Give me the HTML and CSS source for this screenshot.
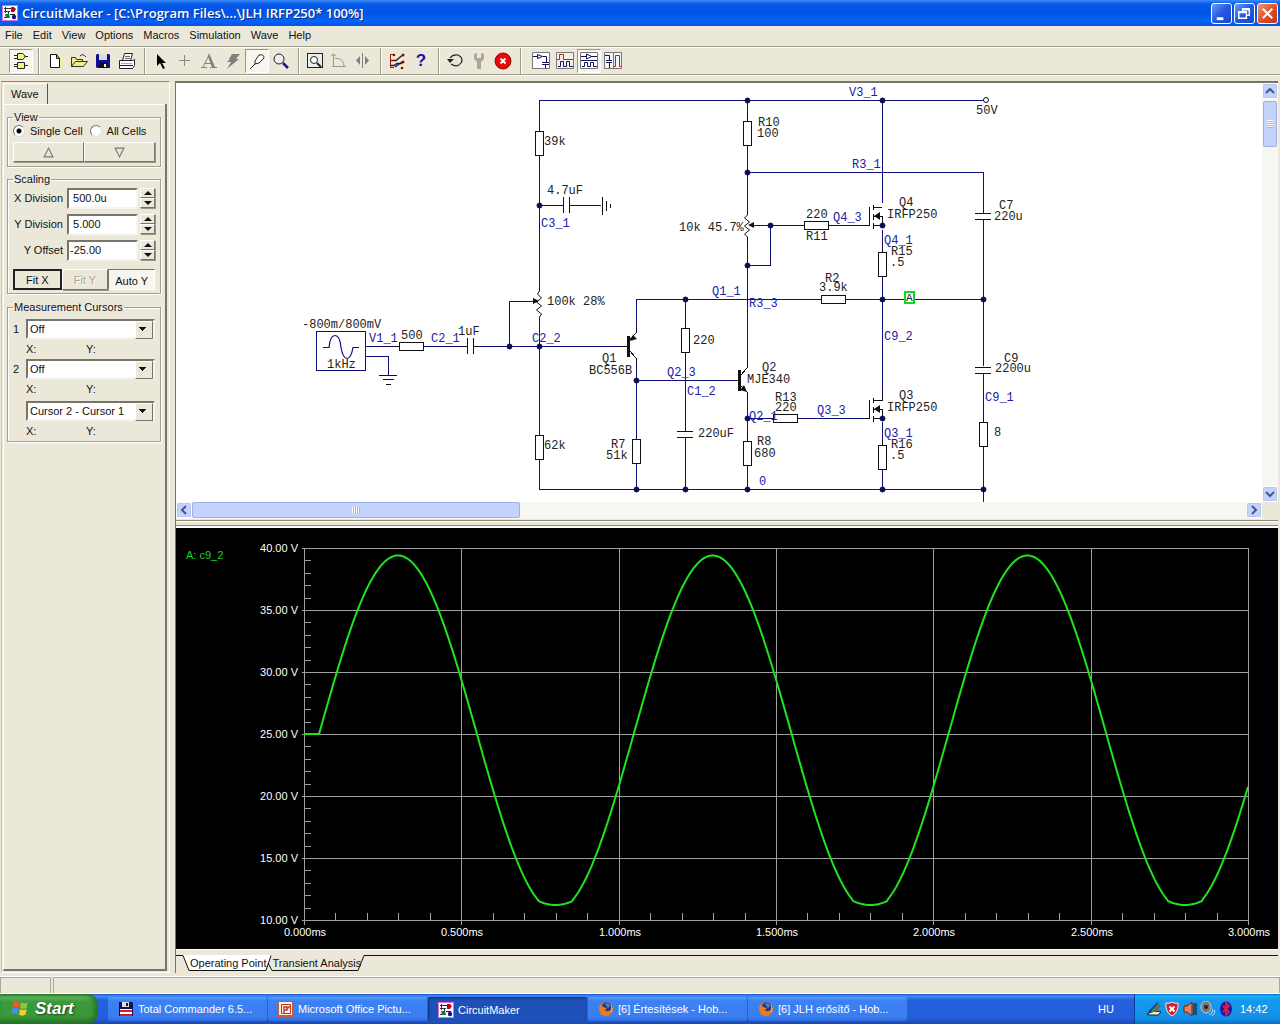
FILE: index.html
```html
<!DOCTYPE html>
<html lang="en">
<head>
<meta charset="utf-8">
<title>CircuitMaker</title>
<link rel="stylesheet" href="styles.css">
</head>
<body>
<svg class="defs" aria-hidden="true">
  <defs>
    <symbol id="app" viewBox="0 0 16 16">
      <rect width="16" height="16" fill="#fff"/><rect x="0.500" y="0.500" width="15" height="15" fill="none" stroke="#e070d8"/>
      <path d="M2 3.500h7M2 6.500h6M3.500 2v6M6.500 6v7M2 12.500h3" stroke="#333" fill="none"/>
      <path d="M9 2h3l2 2-2 3H9z" fill="#c00020"/><path d="M3 9h4l1 4H4z" fill="#0a7a30"/><circle cx="12" cy="12" r="2.200" fill="#101090"/><path d="M8 9.500h5" stroke="#222"/>
    </symbol>
    <symbol id="fox" viewBox="0 0 16 16">
      <circle cx="8" cy="8" r="7" fill="#e8641b"/><circle cx="8.500" cy="6.500" r="5" fill="#173f8f"/><path d="M7 3q4-2 5 2l-2 2z" fill="#3b8fd8"/>
      <path d="M1 6l2-3 2 3 4 1-2 2q2 3 7-1 0 6-6 7Q1 15 1 6z" fill="#ef7a1a"/><path d="M13 3q3 5 0 9 1-5 0-9z" fill="#ffc83a"/>
    </symbol>
  </defs>
</svg>

<header class="title-bar">
  <svg class="icon16"><use href="#app"/></svg>
  <h1>CircuitMaker - [C:\Program Files\...\JLH IRFP250* 100%]</h1>
  <div class="window-buttons">
    <button type="button" aria-label="Minimize"><svg viewBox="0 0 20 20"><path d="M5 14h7v3H5z" fill="#fff"/></svg></button>
    <button type="button" aria-label="Restore"><svg viewBox="0 0 20 20"><path d="M8 8V5h7v7h-3M8 6h7M4 8h8v7H4zM4 9h8" stroke="#fff" stroke-width="1.500" fill="none"/></svg></button>
    <button type="button" class="close" aria-label="Close"><svg viewBox="0 0 20 20"><path d="M5 5l10 10M15 5L5 15" stroke="#fff" stroke-width="2.200"/></svg></button>
  </div>
</header>

<nav class="menu-bar">
  <a href="#">File</a><a href="#">Edit</a><a href="#">View</a><a href="#">Options</a><a href="#">Macros</a><a href="#">Simulation</a><a href="#">Wave</a><a href="#">Help</a>
</nav>

<div class="toolbar" role="toolbar">
  <button type="button" class="pressed" aria-label="Parts"><svg viewBox="0 0 20 20"><path d="M6.500 2.500h5q5 3 0 6h-5zM6.500 11.500h7v6h-7zM3 4.500h3M3 7.500h3M14 5.500h3M3 13.500h3M3 15.500h3M14 14.500h3" fill="#f4f08a" stroke="#222"/></svg></button>
  <span class="sep"></span>
  <button type="button" aria-label="New"><svg viewBox="0 0 20 20"><path d="M4 3h8l4 4v10H4z" fill="#f6f470"/><path d="M5.500 3.500h6l3 4v9h-9zM11.500 3.500v4h3" fill="#fff" stroke="#111"/></svg></button>
  <button type="button" aria-label="Open"><svg viewBox="0 0 20 20"><path d="M2.500 15.500v-9h4l1 2h6v2M2.500 15.500l4-5h12l-4 5z" fill="#f4ee80" stroke="#333"/><path d="M11 5q3-3 6 1" fill="none" stroke="#333"/></svg></button>
  <button type="button" aria-label="Save"><svg viewBox="0 0 20 20"><path d="M4 3h12l1 1v13H4l-1-1V4z" fill="#10108c"/><path d="M6 3h8v6H6z" fill="#ddd"/><path d="M6 12h8v5H6z" fill="#111"/><path d="M11 13h2v3h-2z" fill="#eee"/></svg></button>
  <button type="button" aria-label="Print"><svg viewBox="0 0 20 20"><path d="M5.500 9.500l2-7h8l-2 7zM2.500 9.500h13l2-1v6l-2 3h-13zM3 14.500h13" fill="#fafafa" stroke="#222"/><path d="M8 5.500h5M8 7.500h5" stroke="#666"/><path d="M4 12.500h11" stroke="#c2b830"/></svg></button>
  <span class="sep"></span>
  <button type="button" aria-label="Select"><svg viewBox="0 0 20 20"><path d="M6 3v12l3-3 3 6 2-1-3-5h4z" fill="#000"/></svg></button>
  <button type="button" aria-label="Wire"><svg viewBox="0 0 20 20"><path d="M9.500 4v11M4 9.500h11" stroke="#888"/></svg></button>
  <button type="button" aria-label="Text"><svg viewBox="0 0 20 20"><path d="M2 16.500h6M11 16.500h7M4 16l6-12M6 12.500h7" stroke="#808080" fill="none"/><path d="M10 2l6 14h-3L9 6z" fill="#808080"/></svg></button>
  <button type="button" aria-label="Delete"><svg viewBox="0 0 20 20"><path d="M9 3h8l-4 5h3L4 18l4-7H4l3-3H6z" fill="#808080"/></svg></button>
  <button type="button" class="pressed" aria-label="Probe"><svg viewBox="0 0 20 20"><path d="M3 18l5-5v-3l4-6q5-1 5 3l-5 5-4 1" fill="#fff" stroke="#222"/></svg></button>
  <button type="button" aria-label="Zoom"><svg viewBox="0 0 20 20"><circle cx="8" cy="8" r="5" fill="#eee" stroke="#222"/><path d="M12 12l5 5" stroke="#1414a0" stroke-width="2.500"/></svg></button>
  <span class="sep"></span>
  <button type="button" aria-label="Fit"><svg viewBox="0 0 20 20"><rect x="2.500" y="2.500" width="15" height="14" fill="#e4f0f0" stroke="#222"/><circle cx="9" cy="9" r="3.500" fill="#fff" stroke="#222"/><path d="M12 12l4 4" stroke="#222" stroke-width="2"/></svg></button>
  <button type="button" aria-label="Rotate"><svg viewBox="0 0 20 20"><path d="M4.500 3v13M3 15.500h14M2 5l2.500-2L7 5M6 7.500h4q5 2 5 8" fill="none" stroke="#999"/></svg></button>
  <button type="button" aria-label="Mirror"><svg viewBox="0 0 20 20"><path d="M9.500 2v15" stroke="#808080"/><path d="M7 5v9L3 9.500zM12 5v9l4-4.500z" fill="#808080"/></svg></button>
  <span class="sep"></span>
  <button type="button" aria-label="Digital options"><svg viewBox="0 0 20 20"><path d="M3 4h13v13H3z" fill="#f8f0b0"/><path d="M4 9.500h5l6-5M4 14.500h3l3-2h5M8 16l7-5" fill="none" stroke="#16168c" stroke-width="1.500"/><path d="M6 3.500H3.500v13H7M4 9.500h3" stroke="#a01010" fill="none"/><circle cx="7" cy="4" r="1.300" fill="#801010"/><circle cx="16" cy="4" r="1.500" fill="#801010"/><circle cx="16" cy="11" r="1.500" fill="#801010"/><circle cx="15" cy="17" r="1.300" fill="#801010"/></svg></button>
  <button type="button" aria-label="Help"><b class="help">?</b></button>
  <span class="sep"></span>
  <button type="button" aria-label="Reset"><svg viewBox="0 0 20 20"><path d="M5 7q3-4 8-3 6 3 3 8-4 5-10 1" fill="none" stroke="#222" stroke-width="1.200"/><path d="M2 8h7L5 12z" fill="#222"/></svg></button>
  <button type="button" aria-label="Step"><svg viewBox="0 0 20 20"><path d="M5 3v5l3 3v7h4v-7l3-3V3l-3-1v5H8V2z" fill="#aaa79c"/></svg></button>
  <button type="button" aria-label="Stop"><svg viewBox="0 0 20 20"><circle cx="10" cy="10" r="8" fill="#e80808" stroke="#901010"/><path d="M7.500 7.500l5 5M12.500 7.500l-5 5" stroke="#fff" stroke-width="2"/></svg></button>
  <span class="sep"></span>
  <div class="modes">
    <button type="button" aria-label="Schematic only"><svg viewBox="0 0 20 20"><path d="M1.500 1.500h17v16h-17z" fill="#fff" stroke="#777"/><path d="M2 5.500h4M12 5.500h3.500V11M11 11.500h7M11 13.500h7M14.500 14v3M6.500 3.500v4l5-2z" stroke="#111155" fill="none"/></svg></button>
    <button type="button" aria-label="Waves only"><svg viewBox="0 0 20 20"><path d="M1.500 1.500h17v16h-17z" fill="#f4f0e8" stroke="#777"/><path d="M2 8.500h2.500v-5h4v5H18" stroke="#d01818" fill="none"/><path d="M3 15.500h2.500v-5h3v5h3v-5h3v5H18" stroke="#141460" fill="none"/></svg></button>
    <button type="button" class="pressed" aria-label="Split horizontal"><svg viewBox="0 0 20 20"><path d="M1.500 1.500h17v16h-17z" fill="#fff" stroke="#777"/><path d="M2 5.500h5M12 5.500h6M2 9.500h16M7.500 3v5l5-2.500zM3 15.500h2.500v-4h3v4h3v-4h3v4H18" stroke="#141455" fill="none"/></svg></button>
    <button type="button" aria-label="Split vertical"><svg viewBox="0 0 20 20"><path d="M1.500 1.500h17v16h-17zM10.500 2v15" fill="#f4f4f8" stroke="#777"/><path d="M2 4.500h4.500V9M3 9.500h6M3 11.500h6M6.500 12v5" stroke="#141455" fill="none"/><path d="M11 15.500h1.500v-11h4v11H18" stroke="#d01818" fill="none"/></svg></button>
  </div>
</div>

<main class="main">
  <aside class="sidebar">
    <div class="side-tab">Wave</div>
    <form class="panel">
      <fieldset class="view">
        <legend>View</legend>
        <div class="radios">
          <label><input type="radio" name="cells" checked>Single Cell</label>
          <label><input type="radio" name="cells">All Cells</label>
        </div>
        <div class="pair">
          <button type="button" aria-label="Up"><svg viewBox="0 0 10 10"><path d="M5 1l4 8H1z" fill="none" stroke="#777"/></svg></button>
          <button type="button" aria-label="Down"><svg viewBox="0 0 10 10"><path d="M5 9l4-8H1z" fill="none" stroke="#777"/></svg></button>
        </div>
      </fieldset>
      <fieldset class="scaling">
        <legend>Scaling</legend>
        <div class="field"><label for="xd">X Division</label><input id="xd" value=" 500.0u"><span class="spin"><button type="button" aria-label="X up"></button><button type="button" class="down" aria-label="X down"></button></span></div>
        <div class="field"><label for="yd">Y Division</label><input id="yd" value=" 5.000"><span class="spin"><button type="button" aria-label="Y up"></button><button type="button" class="down" aria-label="Y down"></button></span></div>
        <div class="field"><label for="yo">Y Offset</label><input id="yo" value="-25.00"><span class="spin"><button type="button" aria-label="Offset up"></button><button type="button" class="down" aria-label="Offset down"></button></span></div>
        <div class="fits">
          <button type="button" class="default">Fit X</button>
          <button type="button" disabled>Fit Y</button>
          <button type="button" class="on">Auto Y</button>
        </div>
      </fieldset>
      <fieldset class="cursors">
        <legend>Measurement Cursors</legend>
        <label for="c1">1</label><span class="combo"><select id="c1"><option>Off</option></select></span>
        <p><span>X:</span><span>Y:</span></p>
        <label for="c2">2</label><span class="combo"><select id="c2"><option>Off</option></select></span>
        <p><span>X:</span><span>Y:</span></p>
        <span class="combo last"><select aria-label="Difference"><option>Cursor 2 - Cursor 1</option></select></span>
        <p><span>X:</span><span>Y:</span></p>
      </fieldset>
    </form>
  </aside>

  <section class="work">
    <div class="schematic">
      <svg class="drawing" viewBox="176 83 1086 419" width="1086" height="419">
        <g class="wire">
          <path d="M539 126V100H985M539 161V291M539 205H560M572 205H601M509 346V301H533M539 317V435M539 459V489H983"/>
          <path d="M365 346H394M365 356H388V375M423 346H461M478 346H622M636 333V299H816M685 299V328M685 352V426M685 441V489M636 360V439M636 463V489M636 380H733"/>
          <path d="M747 100V116M747 145V210M747 172H983V213M747 243V362M747 265H770V225H752M770 225H799M828 225H863M882 100V203M882 230V248M882 276V392M845 299H983M983 219V366M983 374V417M983 446V502"/>
          <path d="M747 396V435M747 465V489M747 418H773M802 418H863M882 422V440M882 469V489"/>
        </g>
        <g class="part">
          <path d="M539 126V131M539 155V161M560 205H563M569 205H572M563 197V213M569 197V213M602 197V215M606 201V211M610 204V208"/>
          <path d="M394 346H399M461 346H467M473 346H478M467 338V354M473 338V354M379 375H397M383 379H394M386 384H391M620 346H627M747 116V121M799 225H804M828 225H833M863 225H869V207M816 299H821M797 418H802M747 435V441M882 248V252M882 440V445M983 417V422"/>
          <path d="M677 431H693M677 437H693M685 426V431M685 437V441M975 213H991M975 219H991M975 367H991M975 373H991M733 380H739M863 418H869V400"/>
          <path d="M873 205V210M873 214V220M873 223V229M873 207H882M873 216H882V225M873 225H882M873 398V403M873 407V413M873 416V422M873 400H882V392M873 409H882V418M873 418H882"/>
          <rect x="535" y="131" width="8" height="24"/><rect x="535" y="435" width="8" height="24"/><rect x="399" y="342" width="24" height="8"/>
          <rect x="632" y="439" width="8" height="24"/><rect x="681" y="328" width="8" height="24"/><rect x="743" y="121" width="8" height="24"/>
          <rect x="743" y="441" width="8" height="24"/><rect x="804" y="221" width="24" height="8"/><rect x="821" y="295" width="24" height="8"/>
          <rect x="773" y="414" width="24" height="8"/><rect x="878" y="252" width="8" height="24"/><rect x="878" y="445" width="8" height="24"/><rect x="979" y="422" width="8" height="24"/>
          <path d="M636 328V333L629 341M629 350L636 358V363M747 362V368L741 375M741 386L747 392V397"/>
        </g>
        <rect class="wire" x="316" y="331" width="49" height="39"/>
        <g class="curve">
          <path d="M539.500 291l-2 3 4 4-5 4 5 4-5 4 5 4-2 3M747.500 210v5l-3 3 5 4-5 4 5 4-5 4 3 3v6"/>
          <path class="sine" d="M323 347.500h6q1-12 6-12t6 12q2 11 6 11t6-11h6"/>
          <circle cx="986" cy="100" r="2.500"/>
        </g>
        <g class="solid">
          <path d="M627 336h3v21h-3zM738 370h3v21h-3zM539 301l-6-3v6zM748 225l6-3v6zM630 341l3-6 4 4zM747 392l-7-2 4-5zM874 216l6-4v8zM874 409l6-4v8z"/>
        </g>
        <g class="node">
          <circle cx="539.500" cy="205.500" r="2.500"/><circle cx="509.500" cy="346.500" r="2.500"/><circle cx="539.500" cy="346.500" r="2.500"/><circle cx="636.500" cy="380.500" r="2.500"/>
          <circle cx="747.500" cy="100.500" r="2.500"/><circle cx="882.500" cy="100.500" r="2.500"/><circle cx="747.500" cy="172.500" r="2.500"/><circle cx="770.500" cy="225.500" r="2.500"/>
          <circle cx="747.500" cy="265.500" r="2.500"/><circle cx="882.500" cy="225.500" r="2.500"/><circle cx="685.500" cy="299.500" r="2.500"/><circle cx="882.500" cy="299.500" r="2.500"/>
          <circle cx="983.500" cy="299.500" r="2.500"/><circle cx="747.500" cy="418.500" r="2.500"/><circle cx="882.500" cy="418.500" r="2.500"/><circle cx="636.500" cy="489.500" r="2.500"/>
          <circle cx="685.500" cy="489.500" r="2.500"/><circle cx="747.500" cy="489.500" r="2.500"/><circle cx="882.500" cy="489.500" r="2.500"/><circle cx="983.500" cy="489.500" r="2.500"/>
        </g>
        <g class="value">
          <text x="544" y="145">39k</text><text x="547" y="194">4.7uF</text><text x="547" y="305">100k 28%</text><text x="302" y="328">-800m/800mV</text>
          <text x="327" y="368">1kHz</text><text x="401" y="339">500</text><text x="458" y="335">1uF</text><text x="544" y="449">62k</text>
          <text x="602" y="362">Q1</text><text x="589" y="374">BC556B</text><text x="611" y="448">R7</text><text x="606" y="459">51k</text>
          <text x="758" y="126">R10</text><text x="757" y="137">100</text><text x="976" y="114">50V</text><text x="679" y="231">10k 45.7%</text>
          <text x="806" y="218">220</text><text x="806" y="240">R11</text><text x="899" y="206">Q4</text><text x="887" y="218">IRFP250</text>
          <text x="891" y="255">R15</text><text x="890" y="266">.5</text><text x="825" y="282">R2</text><text x="819" y="291">3.9k</text>
          <text x="999" y="209">C7</text><text x="994" y="220">220u</text><text x="693" y="344">220</text><text x="698" y="437">220uF</text>
          <text x="762" y="371">Q2</text><text x="747" y="383">MJE340</text><text x="775" y="401">R13</text><text x="775" y="411">220</text>
          <text x="757" y="445">R8</text><text x="754" y="457">680</text><text x="899" y="399">Q3</text><text x="887" y="411">IRFP250</text>
          <text x="891" y="448">R16</text><text x="890" y="459">.5</text><text x="1004" y="362">C9</text><text x="995" y="372">2200u</text><text x="994" y="436">8</text>
        </g>
        <g class="net">
          <text x="541" y="227">C3_1</text><text x="369" y="342">V1_1</text><text x="431" y="342">C2_1</text><text x="532" y="342">C2_2</text>
          <text x="849" y="96">V3_1</text><text x="852" y="168">R3_1</text><text x="833" y="221">Q4_3</text><text x="884" y="244">Q4_1</text>
          <text x="712" y="295">Q1_1</text><text x="749" y="307">R3_3</text><text x="667" y="376">Q2_3</text><text x="687" y="395">C1_2</text>
          <text x="749" y="420">Q2_1</text><text x="817" y="414">Q3_3</text><text x="884" y="437">Q3_1</text><text x="884" y="340">C9_2</text>
          <text x="985" y="401">C9_1</text><text x="759" y="485">0</text>
        </g>
        <rect class="probe" x="905" y="292" width="9" height="11"/>
        <text class="probe-name" x="906" y="301">A</text>
      </svg>
      <div class="vbar">
        <button type="button" aria-label="Scroll up"><svg viewBox="0 0 14 14"><path d="M3 9l4-4 4 4" /></svg></button>
        <span class="thumb"></span>
        <button type="button" aria-label="Scroll down"><svg viewBox="0 0 14 14"><path d="M3 5l4 4 4-4"/></svg></button>
      </div>
      <div class="hbar">
        <button type="button" aria-label="Scroll left"><svg viewBox="0 0 14 14"><path d="M9 3L5 7l4 4"/></svg></button>
        <span class="thumb"></span>
        <button type="button" aria-label="Scroll right"><svg viewBox="0 0 14 14"><path d="M5 3l4 4-4 4"/></svg></button>
      </div>
    </div>
    <div class="plot">
      <svg viewBox="176 528 1102 421" id="plot">
        <g class="grid" id="grid"></g>
        <path class="trace" id="trace"/>
        <g class="axis" id="axis"></g>
        <text class="trace-name" x="186" y="559">A: c9_2</text>
      </svg>
    </div>
    <div class="sheets">
      <svg viewBox="0 0 190 18" width="190" height="18"><path class="front" d="M7 0L14 15H90L95 0z"/><path d="M0 .5H7L13 15.500H90L95 .5M92 8L96 15.500H182L188 .5H190"/></svg>
      <div class="sheet-names"><a href="#">Operating Point</a><a href="#">Transient Analysis</a></div>
    </div>
  </section>
</main>

<div class="status"><span></span><span></span></div>

<footer class="taskbar">
  <button type="button" class="start"><svg viewBox="0 0 18 18"><path d="M3 3q3-2 6 0L8 8q-3-2-6 0z" fill="#ee5a20"/><path d="M10 3q3 2 6 0l-1 5q-3 2-6 0z" fill="#8cc83c"/><path d="M2 9q3-2 6 0l-1 5q-3-2-6 0z" fill="#4a8af0"/><path d="M9 9q3 2 6 0l-1 5q-3 2-6 0z" fill="#f8c830"/></svg>Start</button>
  <div class="tasks">
    <button type="button"><svg class="icon16" viewBox="0 0 16 16"><path d="M1 1h13l1 1v13H1z" fill="#101060"/><path d="M4 1h7v5H4z" fill="#ddd"/><path d="M8 2h2v3H8z" fill="#101060"/><path d="M2 8h12v7H2z" fill="#fff"/><path d="M2 9h12v2H2zM2 13h12v2H2z" fill="#d02020"/></svg>Total Commander 6.5...</button>
    <button type="button"><svg class="icon16" viewBox="0 0 16 16"><rect width="16" height="16" rx="1" fill="#d0563a"/><rect x="1" y="1" width="13" height="13" fill="#fbeee8"/><path d="M3.500 3.500h9v9h-9z" fill="none" stroke="#b83a20"/><path d="M6 12V6h3v3H6M9 8l3-3" fill="none" stroke="#b83a20" stroke-width="1.300"/></svg>Microsoft Office Pictu...</button>
    <button type="button" class="active"><svg class="icon16"><use href="#app"/></svg>CircuitMaker</button>
    <button type="button"><svg class="icon16"><use href="#fox"/></svg>[6] Értesítések - Hob...</button>
    <button type="button"><svg class="icon16"><use href="#fox"/></svg>[6] JLH erősítő - Hob...</button>
  </div>
  <span class="lang">HU</span>
  <div class="tray">
    <svg class="icon16" viewBox="0 0 16 16"><path d="M1 13l7-3 7 1-3 3H3z" fill="#eee" stroke="#222"/><path d="M3 11l9-9" stroke="#1a30c0" stroke-width="2"/><path d="M6 11l7-8" stroke="#20a030" stroke-width="2"/><path d="M9 11l5-7" stroke="#e03020" stroke-width="1.500"/></svg>
    <svg class="icon16" viewBox="0 0 16 16"><path d="M8 1q3 2 6 1 1 9-6 13Q1 11 2 2q3 1 6-1z" fill="#d81e28" stroke="#eee"/><path d="M5.500 5.500l5 5M10.500 5.500l-5 5" stroke="#fff" stroke-width="2"/></svg>
    <svg class="icon16" viewBox="0 0 16 16"><path d="M2 5h3l5-4v14l-5-4H2z" fill="#f08050" stroke="#702010"/><path d="M12 2v12M14 2v12" stroke="#222" stroke-width="1.200"/></svg>
    <svg class="icon16" viewBox="0 0 16 16"><ellipse cx="6" cy="6" rx="5" ry="6" fill="#777" stroke="#ccc"/><circle cx="6" cy="6" r="2" fill="#222"/><path d="M9 14q4-1 4-6M12 15q3-2 3-6" stroke="#b8dcf8" fill="none"/></svg>
    <svg class="icon16" viewBox="0 0 16 16"><ellipse cx="8" cy="8" rx="6" ry="7.500" fill="#1418b0"/><path d="M5 5l6 6-3 3V2l3 3-6 6" fill="none" stroke="#e02030" stroke-width="1.800"/></svg>
    <time>14:42</time>
  </div>
</footer>
<script src="plot.js"></script>
</body>
</html>
```
FILE: styles.css
```css
* { box-sizing: border-box; }
body {
  margin: 0; height: 100vh; display: flex; flex-direction: column; overflow: hidden;
  background: #ebe8d9; color: #111; font: 11px/14px "Liberation Sans", Arial, sans-serif;
}
button, input, select { font: inherit; color: inherit; margin: 0; padding: 0; border-radius: 0; }
a { color: inherit; text-decoration: none; }
.defs { display: none; }
.icon16 { width: 16px; height: 16px; flex: none; }

.title-bar {
  flex: none; height: 26px; display: flex; align-items: center; gap: 4px; padding: 0 2px;
  background: linear-gradient(#3a8cf8 0, #0a5ae8 4px, #0054e3 12px, #0662fa 21px, #0455e0 26px); color: #fff;
}
.title-bar h1 { margin: 0; flex: 1; font: 600 13px/18px "Open Sans", "Trebuchet MS", sans-serif; text-shadow: 1px 1px 0 #0a2a88; white-space: nowrap; }
.window-buttons { display: flex; gap: 2px; }
.window-buttons button { width: 21px; height: 21px; border: 1px solid #fff; border-radius: 3px; background: linear-gradient(135deg, #6f9af4, #2458e0 50%, #1a48cc); }
.window-buttons .close { background: linear-gradient(135deg, #f09878, #e0502a 50%, #c03810); }
.window-buttons svg { display: block; width: 19px; height: 19px; }

.menu-bar { flex: none; display: flex; gap: 10px; height: 20px; padding: 2px 5px; }

.toolbar { flex: none; display: flex; align-items: center; height: 29px; padding-left: 9px; border-top: 1px solid #9d9b8c; border-bottom: 1px solid #9d9b8c; box-shadow: inset 0 1px #fff, 0 1px #fff; }
.toolbar button { width: 24px; height: 24px; border: 1px solid transparent; background: none; display: grid; place-items: center; }
.toolbar svg { width: 20px; height: 20px; display: block; }
.toolbar .pressed { border-color: #99978a #fff #fff #99978a; background: #f6f5ee; }
.toolbar .sep { width: 10px; height: 26px; background: linear-gradient(90deg, transparent 5px, #9d9b8c 5px 6px, #fff 6px 7px, transparent 7px); }
.toolbar .help { font: bold 17px/20px "Liberation Sans", Arial, sans-serif; color: #1414b4; }
.toolbar .modes { display: flex; margin-left: 4px; }

.main { flex: 1; min-height: 0; display: flex; gap: 5px; padding: 6px 2px 4px 1px; }
.sidebar { flex: none; width: 169px; display: flex; flex-direction: column; border: 1px solid; border-color: #8a887a #fff #fff #c9c6b8; padding: 1px 2px 1px 1px; }
.side-tab { align-self: flex-start; width: 45px; height: 21px; padding: 3px 7px; border-right: 1px solid #555; border-left: 1px solid #fff; border-top: 1px solid #fff; }
.panel { flex: 1; padding: 6px 4px 0 3px; border-right: 2px solid #77766c; border-bottom: 2px solid #77766c; border-left: 1px solid #fff; box-shadow: inset 0 1px #fff; }
fieldset { position: static; margin: 0; min-width: 0; border: 1px solid #a19f90; box-shadow: inset 1px 1px #fff, 1px 1px #fff; padding: 0 5px; }
legend { padding: 0 1px; margin-left: 0; line-height: 14px; }
.view { height: 57px; }
.scaling { height: 122px; margin-top: 5px; }
.cursors { height: 142px; margin-top: 6px; }
.radios { display: flex; gap: 7px; height: 18px; }
.radios label { display: flex; align-items: center; gap: 5px; height: 14px; white-space: nowrap; }
.radios input { appearance: none; width: 12px; height: 12px; border-radius: 50%; border: 1px solid; border-color: #77756a #ddd #ddd #77756a; background: #fff; }
.radios input:checked { background: radial-gradient(circle at center, #000 2px, #fff 3px); }
.pair, .fits { display: flex; }
.pair button, .fits button, .spin button {
  background: #ebe8d9; border: 1px solid; border-color: #fff #77756a #77756a #fff; box-shadow: 1px 1px #999789;
}
.pair button { flex: 1; height: 20px; display: grid; place-items: center; }
.pair svg { width: 11px; height: 11px; }
.field { display: flex; align-items: center; height: 26px; gap: 2px; }
.field label { flex: 1; text-align: right; margin-right: 2px; white-space: nowrap; }
.field input { flex: none; width: 71px; height: 21px; padding: 0 1px; border: 2px solid; border-color: #77756a #f6f5ee #f6f5ee #77756a; background: #fff; }
.spin { flex: none; display: flex; flex-direction: column; width: 15px; }
.spin button { height: 10px; display: grid; place-items: center; }
.spin button::before { content: ""; border: 4px solid transparent; border-top: 0; border-bottom: 4px solid #111; }
.spin .down::before { border-top: 4px solid #111; border-bottom: 0; }
.scaling .field:first-of-type { margin-top: -1px; }
.fits { margin-top: 6px; }
.fits button { flex: 1; height: 21px; }
.fits .default { border: 2px solid #222; box-shadow: none; }
.fits :disabled { color: #a9a698; text-shadow: 1px 1px #fff; }
.fits .on { background: #f6f5ee; border-color: #77756a #fff #fff #77756a; box-shadow: none; padding-top: 2px; }
.cursors { display: grid; grid-template-columns: 13px 1fr; grid-auto-rows: 20px; align-content: start; align-items: center; padding-top: 5px; }
.cursors p { grid-column: 2; margin: 0; display: grid; grid-template-columns: 60px 1fr; }
.combo { position: relative; height: 20px; }
.combo.last { grid-column: 2; margin-top: 3px; }
.combo.last + p { margin-top: 3px; }
.combo select { appearance: none; display: block; width: 100%; height: 20px; padding: 0 2px; border: 2px solid; border-color: #77756a #f6f5ee #f6f5ee #77756a; background: #fff; }
.combo::after { content: ""; position: absolute; right: 2px; top: 2px; width: 16px; height: 16px; border: 1px solid; border-color: #fff #77756a #77756a #fff; background: linear-gradient(#111, #111) 6px 8px / 1px 1px no-repeat, linear-gradient(#111, #111) 5px 7px / 3px 1px no-repeat, linear-gradient(#111, #111) 4px 6px / 5px 1px no-repeat, linear-gradient(#111, #111) 3px 5px / 7px 1px no-repeat, #ebe8d9; pointer-events: none; }

.work { flex: 1; min-width: 0; display: flex; flex-direction: column; border-left: 1px solid #77756a; }
.schematic { flex: none; display: grid; grid-template-columns: 1fr 16px; grid-template-rows: 419px 17px; background: linear-gradient(#fff, #fff) 0 0 / 100% 419px no-repeat, #ebe8d9; border-top: 2px solid #77756a; overflow: hidden; }
.drawing { display: block; }
.wire { fill: none; stroke: #10107c; shape-rendering: crispEdges; }
.part { fill: none; stroke: #111; shape-rendering: crispEdges; }
.part rect { fill: #fff; }
.curve { fill: none; stroke: #111; }
.curve .sine { stroke: #10107c; stroke-width: 1.200; }
.curve circle { fill: #fff; }
.solid { fill: #111; }
.node { fill: #0c0c50; stroke: #0c0c50; stroke-width: 1; }
.value, .net, .probe-name { font: 12px "Liberation Mono", "Courier New", monospace; fill: #222; white-space: pre; }
.net { fill: #2020a8; }
.probe { fill: #fff; stroke: #10d820; stroke-width: 2; shape-rendering: crispEdges; }
.probe-name { font-size: 11px; }
.vbar, .hbar { display: flex; background: #f6f6f2; }
.vbar { flex-direction: column; }
.hbar { grid-column: 1; }
.vbar button, .hbar button { flex: none; width: 16px; height: 16px; border: 1px solid #fff; border-radius: 2px; background: #c4d3fb; box-shadow: inset 0 0 0 1px #b4c6f4; }
.vbar svg, .hbar svg { display: block; width: 14px; height: 14px; fill: none; stroke: #3f5a86; stroke-width: 2; }
.thumb { border: 1px solid #9cb2e6; border-radius: 2px; background: #c4d3fb; }
.vbar .thumb { height: 46px; margin: 2px 1px auto; background: repeating-linear-gradient(#fff 0 1px, #9cb2e6 1px 2px) center / 6px 8px no-repeat, #c4d3fb; }
.hbar .thumb { width: 328px; margin: 0 auto 1px 0; background: repeating-linear-gradient(90deg, #fff 0 1px, #9cb2e6 1px 2px) center / 8px 6px no-repeat, #c4d3fb; }

.plot { flex: 1; min-height: 0; margin-top: 1px; padding-top: 8px; background: linear-gradient(#8a887a 0 1px, #fff 1px 2px, #ebe8d9 2px 5px, #8a887a 5px 6px, #fff 6px 8px, #000 8px); }
.plot svg { display: block; width: 100%; height: 100%; background: #000; }
.grid { stroke: #a0a0a0; fill: none; shape-rendering: crispEdges; }
.trace { fill: none; stroke: #1ee41e; stroke-width: 2; stroke-linejoin: round; }
.axis { font: 11px "Liberation Sans", Arial, sans-serif; fill: #fff; }
.axis .v { text-anchor: end; }
.axis .t { text-anchor: middle; }
.trace-name { font: 11px "Liberation Sans", Arial, sans-serif; fill: #18d818; }

.sheets { flex: none; position: relative; height: 24px; padding-top: 5px; border-top: 1px solid #fff; background: linear-gradient(#111, #111) 189px 5px / 100% 1px no-repeat; }
.sheets svg { display: block; fill: none; stroke: #111; }
.sheets .front { fill: #fff; stroke: none; }
.sheet-names { position: absolute; left: 14px; top: 6px; display: flex; gap: 6px; white-space: nowrap; }

.status { flex: none; display: flex; gap: 2px; height: 17px; border-bottom: 1px solid #fff; }
.status span { border: 1px solid #aaa89a; border-bottom: 0; box-shadow: 0 -1px #fff; }
.status span:first-child { width: 51px; }
.status span:last-child { flex: 1; }

.taskbar { flex: none; display: flex; align-items: stretch; height: 30px; color: #fff; background: linear-gradient(#1c50c0 0, #3f8cf6 2px, #2660de 6px, #245edb 24px, #1a48b0 30px); }
.taskbar button { color: #fff; border: 0; }
.start { width: 98px; display: flex; align-items: center; gap: 5px; padding-left: 10px; border-radius: 0 10px 10px 0; background: linear-gradient(#2c7a2c, #5cb65c 3px, #3c983c 8px, #389838 22px, #2a7428); box-shadow: inset -3px 0 5px #246c24; }
.taskbar .start { font: italic bold 17px/20px "Liberation Sans", Arial, sans-serif; text-shadow: 1px 1px 2px #1c3c1c; }
.start svg { width: 20px; height: 20px; }
.tasks { flex: 1; display: flex; gap: 1px; padding: 3px 0 3px 10px; }
.tasks button { flex: 0 1 159px; display: flex; align-items: center; gap: 4px; padding: 0 10px; white-space: nowrap; overflow: hidden; border-radius: 2px; background: linear-gradient(#5a9af8, #3c81f3 4px, #3a7df0 20px, #2f6bdc); }
.tasks .active { background: #1e50b8; box-shadow: inset 1px 1px 2px #10307c; padding-top: 2px; }
.lang { align-self: center; margin-right: 20px; }
.tray { width: 146px; display: flex; align-items: center; gap: 2px; padding-left: 11px; border-left: 1px solid #0c3c9c; background: linear-gradient(#0c6ad0, #1cb0f8 2px, #149aee 6px, #1290e8 24px, #0c70c8); }
.tray time { margin-left: 4px; }
```
FILE: plot.js
```js
// Plot area: 0..3 ms across, 10..40 V upwards, in drawing units.
const left = 304, right = 1248, top_ = 548, bottom = 920;
const step = (right - left) / 6;
const add = (parent, name, attrs, text) => {
  const node = document.createElementNS("http://www.w3.org/2000/svg", name);
  for (const key in attrs) node.setAttribute(key, attrs[key]);
  if (text) node.textContent = text;
  document.getElementById(parent).appendChild(node);
};
let lines = "";
for (let i = 0; i <= 6; i++) {
  const x = Math.round(left + i * step), y = top_ + i * 62;
  lines += `M${x} ${top_}V925M302 ${y}H${right}`;
  add("axis", "text", { class: "v", x: 298, y: y + 4 }, (40 - i * 5).toFixed(2) + " V");
  add("axis", "text", { class: "t", x: x + 1, y: 936 }, (i / 2).toFixed(3) + "ms");
}
for (let i = 0; i < 30; i++) {
  const x = Math.round(left + i * step / 5), y = Math.round(top_ + i * 12.4);
  lines += `M${x} 913V${bottom}M${left} ${y}H311`;
}
add("grid", "path", { d: lines });

// Output voltage: a sine that flattens where the stage clips.
const middle = 733, swing = 177.5, period = 314.7, peak = 398;
let d = `M${left} 734H319`;
for (let x = 320; x <= right; x++) {
  const phase = ((x - peak) % period + period) % period;
  let y = middle - swing * Math.cos(2 * Math.PI * phase / period);
  if (phase > 140 && phase < 175) y = 905 - 4 * ((phase - 157.5) / 17) ** 2;
  d += `L${x} ${y.toFixed(1)}`;
}
document.getElementById("trace").setAttribute("d", d);
```
